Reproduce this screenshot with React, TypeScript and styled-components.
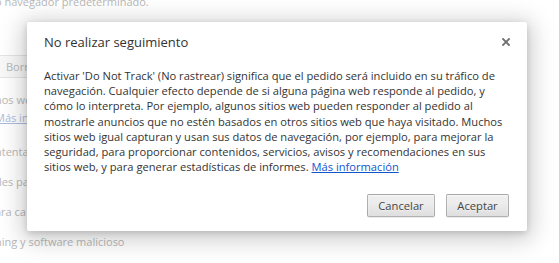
import React from "react";
import styled, { createGlobalStyle } from "styled-components";

const Global = createGlobalStyle`
  html, body { margin: 0; padding: 0; background: #fff; overflow: hidden; }
  #root { width: 559px; height: 263px; }
`;

const Screen = styled.div`
  position: relative;
  width: 559px;
  height: 263px;
  overflow: hidden;
  background: #fff;
  font-family: "Open Sans", "Noto Sans", sans-serif;
`;

const BgPage = styled.div`
  display: flex;
  flex-direction: column;
  margin-top: -8px;
  margin-left: -5px;
  font-size: 11px;
  color: #b8b8b8;
`;

const BgLine = styled.div`
  height: 20px;
  line-height: 20px;
  white-space: nowrap;
`;

const BgButton = styled.div`
  margin-top: 43px;
  margin-left: -20px;
  width: 50px;
  height: 21px;
  line-height: 21px;
  padding-left: 30px;
  border: 1px solid #e4e4e4;
  border-radius: 2px;
  background: #f8f8f8;
  white-space: nowrap;
  overflow: hidden;
`;

const BgPara = styled.div`
  margin-top: 13px;
  line-height: 18px;
  white-space: nowrap;
`;

const BgLink = styled.span`
  color: #aebbdc;
  text-decoration: underline;
`;

const BgRows = styled.div`
  margin-top: 10px;
  display: flex;
  flex-direction: column;
`;

const BgRow = styled.div`
  height: 30px;
  line-height: 30px;
  white-space: nowrap;
`;

const Dialog = styled.div`
  position: absolute;
  left: 27px;
  top: 22px;
  width: 500px;
  height: 209px;
  box-sizing: border-box;
  background: #fff;
  border-radius: 2px;
  box-shadow: 0 4px 23px 5px rgba(0, 0, 0, 0.2), 0 2px 6px rgba(0, 0, 0, 0.15);
  display: flex;
  flex-direction: column;
  color: #333;
`;

const Header = styled.div`
  display: flex;
  align-items: center;
  justify-content: space-between;
  padding: 10px 17px 0 17px;
  height: 20px;
`;

const Title = styled.h1`
  margin: 0;
  font-size: 13px;
  font-weight: normal;
  line-height: 20px;
  color: #333;
`;

const Close = styled.button`
  border: 0;
  padding: 0;
  background: transparent;
  width: 8px;
  height: 8px;
  display: flex;
  cursor: pointer;
`;

const Body = styled.div`
  padding: 16px 17px 0 17px;
  font-size: 11.15px;
  line-height: 15.2px;
  color: #333;
`;

const Line = styled.div`
  white-space: nowrap;
`;

const Link = styled.a`
  color: #15c;
  text-decoration: underline;
`;

const Footer = styled.div`
  margin-top: auto;
  display: flex;
  justify-content: flex-end;
  gap: 11px;
  padding: 0 18px 14px 0;
`;

const Button = styled.button<{ $w: number }>`
  width: ${(p) => p.$w}px;
  height: 23px;
  padding: 0;
  border: 1px solid rgba(0, 0, 0, 0.25);
  border-radius: 2px;
  background: linear-gradient(#ededed, #ededed 38%, #dedede);
  box-shadow: 0 1px 0 rgba(0, 0, 0, 0.08), inset 0 1px 2px rgba(255, 255, 255, 0.75);
  color: #444;
  font-family: "Open Sans", "Noto Sans", sans-serif;
  font-size: 11.2px;
  line-height: 21px;
  text-shadow: 0 1px 0 #f0f0f0;
`;

const lines = [
  "Activar 'Do Not Track' (No rastrear) significa que el pedido será incluido en su tráfico de",
  "navegación. Cualquier efecto depende de si alguna página web responde al pedido, y",
  "cómo lo interpreta. Por ejemplo, algunos sitios web pueden responder al pedido al",
  "mostrarle anuncios que no estén basados en otros sitios web que haya visitado. Muchos",
  "sitios web igual capturan y usan sus datos de navegación, por ejemplo, para mejorar la",
  "seguridad, para proporcionar contenidos, servicios, avisos y recomendaciones en sus",
];

export default function App() {
  return (
    <>
      <Global />
      <Screen>
        <BgPage>
          <BgLine>o navegador predeterminado.</BgLine>
          <BgButton>Borrar</BgButton>
          <BgPara>
            nos web
            <br />
            <BgLink>Más info</BgLink>
          </BgPara>
          <BgRows>
            <BgRow>ntentar (</BgRow>
            <BgRow>des pa</BgRow>
            <BgRow>ara ca</BgRow>
            <BgRow>ning y software malicioso</BgRow>
          </BgRows>
        </BgPage>
        <Dialog role="dialog">
          <Header>
            <Title>No realizar seguimiento</Title>
            <Close aria-label="Cerrar">
              <svg width="8" height="8" viewBox="0 0 8 8">
                <path d="M1 1L7 7M7 1L1 7" stroke="#6f6f6f" strokeWidth="1.8" strokeLinecap="square" />
              </svg>
            </Close>
          </Header>
          <Body>
            {lines.map((l) => (
              <Line key={l}>{l}</Line>
            ))}
            <Line>
              sitios web, y para generar estadísticas de informes. <Link href="#">Más información</Link>
            </Line>
          </Body>
          <Footer>
            <Button $w={68}>Cancelar</Button>
            <Button $w={63}>Aceptar</Button>
          </Footer>
        </Dialog>
      </Screen>
    </>
  );
}
